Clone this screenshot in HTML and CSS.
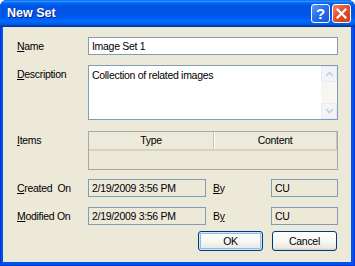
FILE: index.html
```html
<!DOCTYPE html>
<html lang="en">
<head>
    <meta charset="UTF-8">
    <title>New Set</title>
    <link rel="stylesheet" href="styles.css">
</head>
<body>
    <div class="window">
        <div class="titlebar">
            <span class="title">New Set</span>
            <div class="title-buttons">
                <span class="tbtn help">?</span>
                <span class="tbtn close">
                    <svg width="11" height="11" viewBox="0 0 11 11"><path d="M1.5 1.5 L9.5 9.5 M9.5 1.5 L1.5 9.5" stroke="#fff" stroke-width="2.2" stroke-linecap="square"/></svg>
                </span>
            </div>
        </div>
        <div class="client">
            <div class="row">
                <span class="lbl"><u>N</u>ame</span>
                <div class="field edit">Image Set 1</div>
            </div>
            <div class="row gap-desc">
                <span class="lbl"><u>D</u>escription</span>
                <div class="field memo">
                    <div class="memo-text">Collection of related images</div>
                    <div class="vscroll">
                        <div class="sbtn"><svg width="9" height="6" viewBox="0 0 9 6"><path d="M1 5 L4.5 1.5 L8 5" fill="none" stroke="#C3CFE4" stroke-width="1.6"/></svg></div>
                        <div class="strack"></div>
                        <div class="sbtn"><svg width="9" height="6" viewBox="0 0 9 6"><path d="M1 1 L4.5 4.5 L8 1" fill="none" stroke="#C3CFE4" stroke-width="1.6"/></svg></div>
                    </div>
                </div>
            </div>
            <div class="row gap-items">
                <span class="lbl"><u>I</u>tems</span>
                <div class="field listview">
                    <div class="lv-head">
                        <span class="lv-col col-type">Type</span>
                        <span class="lv-col col-content">Content</span>
                        <span class="lv-col col-rest"></span>
                    </div>
                </div>
            </div>
            <div class="row gap-created">
                <span class="lbl"><u>C</u>reated&nbsp; On</span>
                <div class="field ro date">2/19/2009 3:56 PM</div>
                <span class="lbl by"><u>B</u>y</span>
                <div class="field ro user">CU</div>
            </div>
            <div class="row gap-modified">
                <span class="lbl"><u>M</u>odified On</span>
                <div class="field ro date">2/19/2009 3:56 PM</div>
                <span class="lbl by">B<u>y</u></span>
                <div class="field ro user">CU</div>
            </div>
            <div class="buttons">
                <span class="btn default">OK</span>
                <span class="btn">Cancel</span>
            </div>
        </div>
    </div>
</body>
</html>
```
FILE: styles.css
```css
body{
    margin: 0;
    background: #fff;
    font-family: "Liberation Sans", Arial, sans-serif;
    font-size: 10.5px;
    letter-spacing: -0.3px;
    color: #000;
}
.window{
    width: 355px;
    height: 266px;
    display: flex;
    flex-direction: column;
    background: #0055E5;
    border-radius: 7px 7px 0 0;
    box-shadow: inset 0 0 0 1px #0831D9;
    overflow: hidden;
}
.titlebar{
    height: 27px;
    flex: none;
    display: flex;
    align-items: center;
    padding: 0 4px 0 7px;
    background: linear-gradient(to bottom, #0058EE 0%, #3593FF 4%, #288EFF 6%, #127DFF 8%, #036FFC 10%, #0262EE 14%, #0057E5 20%, #0054E3 24%, #0055EB 56%, #005BF5 66%, #026AFE 76%, #0062EF 86%, #0052D6 92%, #0040AB 96%, #003092 100%);
}
.title{
    flex: 1;
    color: #fff;
    font-weight: bold;
    font-size: 12.5px;
    letter-spacing: 0;
    text-shadow: 1px 1px 0 #0A1883;
    padding-bottom: 1px;
}
.title-buttons{
    display: flex;
    gap: 2px;
}
.tbtn{
    width: 19px;
    height: 19px;
    box-sizing: border-box;
    border: 1px solid #fff;
    border-radius: 3px;
    display: flex;
    align-items: center;
    justify-content: center;
    color: #fff;
}
.help{
    background: linear-gradient(135deg, #5A9BFF 0%, #2A6FF0 45%, #1A55D8 100%);
    font-weight: bold;
    font-size: 15px;
    letter-spacing: 0;
}
.close{
    background: linear-gradient(135deg, #F08A6A 0%, #E0522A 45%, #C8401A 100%);
}
.client{
    flex: 1;
    margin: 0 4px 4px 3px;
    background: #ECE9D8;
    padding: 10px 13px 0 14px;
    display: flex;
    flex-direction: column;
}
.row{
    display: flex;
    align-items: flex-start;
}
.gap-desc{ margin-top: 10px; }
.gap-items{ margin-top: 11px; }
.gap-created{ margin-top: 9px; }
.gap-modified{ margin-top: 10px; }
.lbl{
    width: 71px;
    flex: none;
    line-height: 18px;
    white-space: nowrap;
}
.field{
    box-sizing: border-box;
    border: 1px solid #7F9DB9;
    line-height: 16px;
    padding: 0 3px;
    white-space: nowrap;
}
.edit{
    flex: 1;
    height: 18px;
    background: #fff;
}
.memo{
    flex: 1;
    height: 55px;
    background: #fff;
    display: flex;
    padding: 0;
}
.memo-text{
    flex: 1;
    padding: 3px 3px 0;
    line-height: 13px;
}
.vscroll{
    width: 16px;
    display: flex;
    flex-direction: column;
    background: #F7F6F1;
}
.sbtn{
    height: 16px;
    box-sizing: border-box;
    border: 1px solid #E7EBF4;
    border-radius: 2px;
    background: #F3F4F8;
    display: flex;
    align-items: center;
    justify-content: center;
}
.strack{ flex: 1; }
.listview{
    flex: 1;
    height: 39px;
    padding: 0;
    border-color: #A7A6AA;
    background: #ECE9D8;
}
.lv-head{
    display: flex;
    height: 17px;
    border-bottom: 2px solid #D6D2C2;
    background: #EBEADB;
}
.lv-col{
    text-align: center;
    line-height: 16px;
    box-sizing: border-box;
}
.col-type{
    width: 125px;
    border-right: 1px solid #C7C5B2;
    box-shadow: 1px 0 0 #fff;
}
.col-content{
    width: 123px;
    border-right: 1px solid #C7C5B2;
}
.col-rest{ flex: 1; }
.ro{
    height: 18px;
    background: #ECE9D8;
}
.date{ width: 118px; }
.by{
    width: 58px;
    margin-left: 7px;
}
.user{ flex: 1; }
.buttons{
    display: flex;
    justify-content: flex-end;
    gap: 9px;
    margin-top: 6px;
    margin-right: 1px;
}
.btn{
    width: 65px;
    height: 20px;
    box-sizing: border-box;
    border: 1px solid #003C74;
    border-radius: 3px;
    background: linear-gradient(to bottom, #FFFFFF 0%, #F8F8F5 50%, #ECEBE6 85%, #D6D0C5 100%);
    text-align: center;
    line-height: 18px;
}
.default{
    box-shadow: inset 0 0 0 1px #CEE7FF, inset 0 0 0 2px #98B8EA;
}
```
